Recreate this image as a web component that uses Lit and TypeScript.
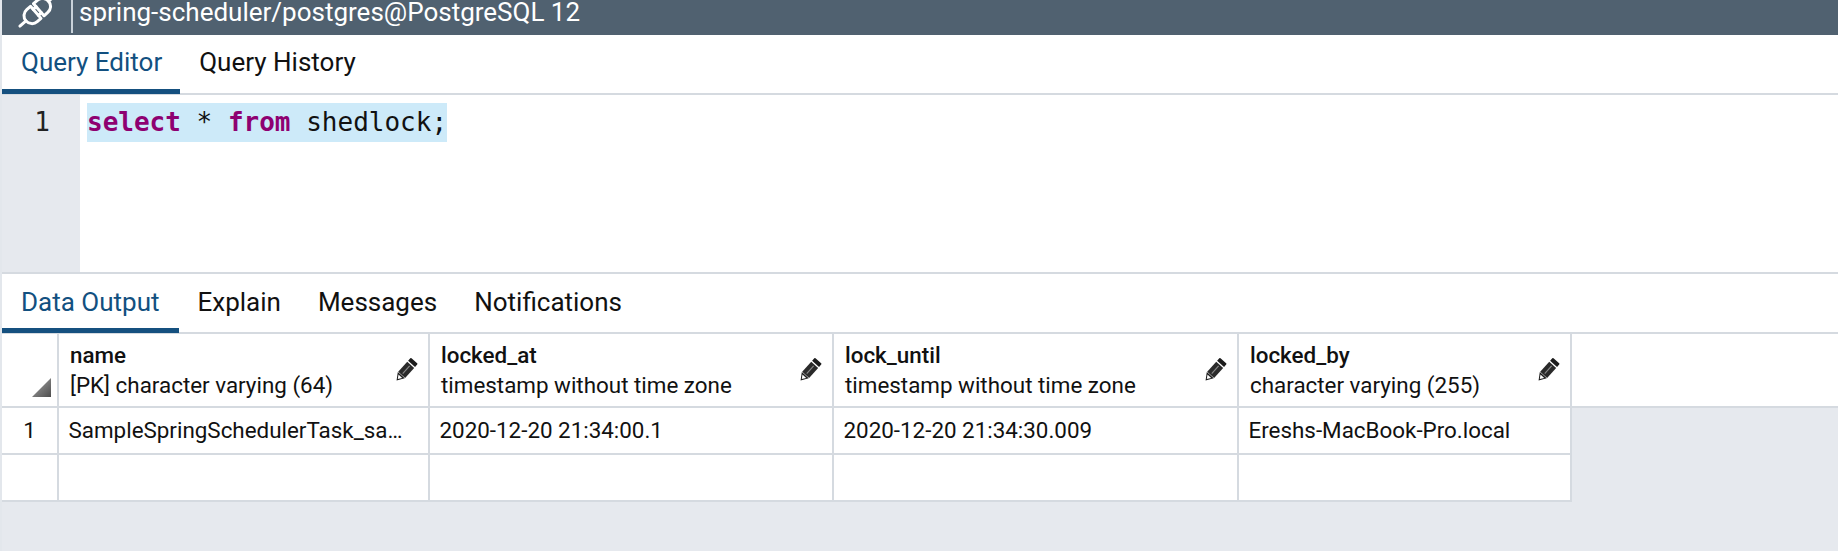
import { LitElement, html, css, svg } from "lit";
import { customElement } from "lit/decorators.js";

const pencil = html`<svg class="pencil" viewBox="0 0 24 24" aria-hidden="true"><g transform="rotate(42 12 12)"><path d="M8.500 0.500h7a.8.8 0 0 1 .8.8V4.300H7.700V1.300a.8.8 0 0 1 .8-.8z" fill="#1c1c1c"/><path d="M7.700 5.500h8.600v12.500H7.700z" fill="#2a2a2a"/><path d="M7.700 18.500h8.600L12 25z" fill="#1c1c1c"/><path d="M12 7v9.500" stroke="#888" stroke-width="1.100"/><path d="M9.700 19.800h4.600L12 23.300z" fill="#fff"/></g></svg>`;

const plug = svg`<g transform="translate(33 13) rotate(49)" fill="none" stroke="#fff" stroke-width="3" stroke-linecap="round" stroke-linejoin="round"><path d="M-8 -1h16v5a8 8 0 0 1-16 0z"/><path d="M0 12v8"/><path d="M-8 -5h16v-5a8 8 0 0 0-16 0z"/><path d="M0 -18v-12"/><path d="M-4 -5v4M4 -5v4"/></g>`;

const columns = [
  { name: "name", type: "[PK] character varying (64)", value: "SampleSpringSchedulerTask_sa…", cls: "c1" },
  { name: "locked_at", type: "timestamp without time zone", value: "2020-12-20 21:34:00.1", cls: "c2" },
  { name: "lock_until", type: "timestamp without time zone", value: "2020-12-20 21:34:30.009", cls: "c3" },
  { name: "locked_by", type: "character varying (255)", value: "Ereshs-MacBook-Pro.local", cls: "c4" },
];

@customElement("app-root")
export class AppRoot extends LitElement {
  static styles = css`
    :host { display: block; width: 1838px; height: 551px; overflow: hidden; background: #fff; font-family: Roboto, "Liberation Sans", sans-serif; color: #111; border-left: 2px solid #e3e7ec; box-sizing: border-box; }
    .main { height: 551px; display: flex; flex-direction: column; }
    .titlebar { height: 35px; background: #506170; display: flex; color: #fff; font-size: 26px; box-sizing: border-box; flex: none; }
    .plug { width: 69px; border-right: 2px solid #c9d2da; height: 33px; flex: none; }
    .plug svg { display: block; width: 69px; height: 33px; overflow: hidden; }
    .title { padding-left: 6px; line-height: 25px; }
    .tabs { display: flex; border-bottom: 2px solid #d5dae0; box-sizing: border-box; font-size: 26px; flex: none; }
    .tabs.q { height: 60px; }
    .tabs.d { height: 60px; }
    .tab { padding: 0 18px 0 19px; display: flex; align-items: center; border-bottom: 5px solid transparent; margin-bottom: -1px; }
    .tabs.d .tab { padding-top: 2px; }
    .tabs.d .tab.active { padding-right: 20px; margin-right: -1px; }
    .tab.active { color: #125080; border-bottom-color: #15507f; }
    .editor { height: 177px; display: flex; border-bottom: 2px solid #d5dae0; box-sizing: content-box; flex: none; }
    .gutter { width: 78px; background: #e6e9ee; font: 26px/39px "DejaVu Sans Mono", monospace; text-align: right; padding: 8px 30px 0 0; box-sizing: border-box; color: #222; }
    .code { margin: 8px 0 0 7px; height: 39px; font: 26px/39px "DejaVu Sans Mono", monospace; background: #cdeaf9; white-space: pre; align-self: flex-start; color: #111; }
    .code b { color: #8e0071; font-weight: 700; }
    .grid { background: #e6e9ee; flex: 1; }
    .row { display: flex; }
    .row.head { height: 74px; background: #fff; border-bottom: 2px solid #d5dae0; box-sizing: border-box; }
    .row.body { height: 47px; box-sizing: border-box; }
    .cell { box-sizing: border-box; background: #fff; border-right: 2px solid #d5dae0; border-bottom: 2px solid #d5dae0; font-size: 22.4px; display: flex; align-items: center; padding: 0 0 2px 9.5px; white-space: nowrap; }
    .row.head .cell { border-bottom: none; position: relative; padding: 0 0 0 11px; flex-direction: column; align-items: flex-start; justify-content: center; line-height: 30px; }
    .cell.num { width: 57px; justify-content: center; padding-left: 0; }
    .c1 { width: 371px; } .c2 { width: 404px; } .c3 { width: 405px; } .c4 { width: 333px; }
    .colname { font-weight: 500; }
    .pencil { position: absolute; right: 9px; top: 23px; width: 26px; height: 26px; }
    .corner { position: absolute; right: 6px; bottom: 9px; width: 19px; height: 19px; background: linear-gradient(135deg, #aaa, #4d4d4d); clip-path: polygon(100% 0, 100% 100%, 0 100%); }
  `;

  render() {
    return html`<div class="main">
      <div class="titlebar">
        <div class="plug"><svg viewBox="0 0 69 33" aria-hidden="true">${plug}</svg></div>
        <div class="title">spring-scheduler/postgres@PostgreSQL 12</div>
      </div>
      <div class="tabs q"><div class="tab active">Query Editor</div><div class="tab">Query History</div></div>
      <div class="editor">
        <div class="gutter">1</div>
        <div class="code"><b>select</b> * <b>from</b> shedlock;</div>
      </div>
      <div class="tabs d">
        <div class="tab active">Data Output</div><div class="tab">Explain</div><div class="tab">Messages</div><div class="tab">Notifications</div>
      </div>
      <div class="grid">
        <div class="row head">
          <div class="cell num"><span class="corner"></span></div>
          ${columns.map((c) => html`<div class="cell ${c.cls}"><span class="colname">${c.name}</span><span>${c.type}</span>${pencil}</div>`)}
        </div>
        <div class="row body">
          <div class="cell num">1</div>
          ${columns.map((c) => html`<div class="cell ${c.cls}">${c.value}</div>`)}
        </div>
        <div class="row body">
          <div class="cell num"></div>
          ${columns.map((c) => html`<div class="cell ${c.cls}"></div>`)}
        </div>
      </div>
    </div>`;
  }
}
